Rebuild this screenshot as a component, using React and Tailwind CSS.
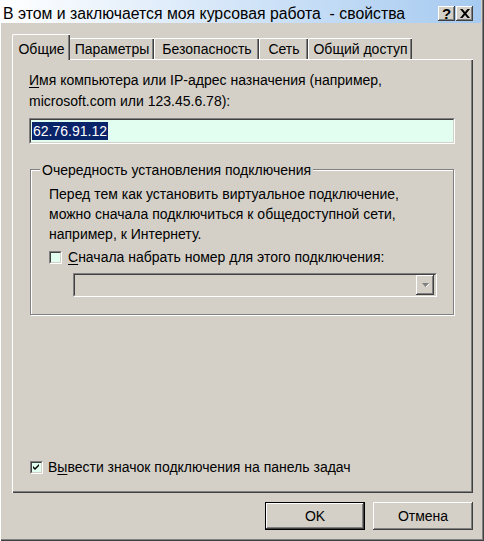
import React from "react";

const font = { fontFamily: '"Liberation Sans", Arial, sans-serif' };

function Sunken({ className = "", children }) {
  return (
    <div className={"border-t border-l border-[#808080] border-b border-r border-b-white border-r-white " + className}>
      <div className="h-full w-full border-t border-l border-[#404040] border-b border-r border-b-[#d4d0c8] border-r-[#d4d0c8]">
        {children}
      </div>
    </div>
  );
}

function Checkbox({ checked }) {
  return (
    <Sunken className="w-[13px] h-[13px] shrink-0">
      <div className="w-full h-full bg-[#e1fef1] flex items-center justify-center">
        {checked && (
          <svg width="7" height="7" viewBox="0 0 7 7">
            <path d="M0 2 L2 4 L6 0 L6 2 L2 6 L0 4 Z" fill="#000" />
          </svg>
        )}
      </div>
    </Sunken>
  );
}

function TitleButton({ children }) {
  return (
    <div className="w-[17px] h-[15px] bg-[#d4d0c8] shadow-[inset_-1px_-1px_#404040,inset_1px_1px_#fff,inset_-2px_-2px_#808080] flex items-center justify-center">
      {children}
    </div>
  );
}

function Tab({ label, active, width }) {
  if (active) {
    return (
      <div
        className="relative z-10 h-[26px] -mb-px -ml-[2px] -mr-[1px] bg-[#d4d0c8] border-t border-l border-white rounded-tl-[2px] shadow-[inset_-1px_0_#404040,inset_-2px_0_#808080] flex items-start justify-center pt-[4px] text-[14px] text-black"
        style={{ width }}
      >
        {label}
      </div>
    );
  }
  return (
    <div
      className="h-[21px] bg-[#d4d0c8] border-t border-l border-white rounded-tl-[2px] shadow-[inset_-1px_0_#404040,inset_-2px_0_#808080] flex items-center justify-center text-[14px] text-black"
      style={{ width }}
    >
      {label}
    </div>
  );
}

export default function App() {
  return (
    <div
      className="w-[484px] h-[541px] bg-[#d4d0c8] relative overflow-hidden shadow-[inset_1px_0_#fff,inset_-1px_-1px_#404040,inset_-2px_-2px_#808080] flex flex-col"
      style={font}
    >
      {/* Title bar */}
      <div className="h-[23px] mr-[3px] bg-gradient-to-r from-white to-[#a6caf0] flex items-start justify-between">
        <div className="pl-[3px] pt-[5px] text-[15.8px] leading-[18px] text-black whitespace-pre">
          В этом и заключается моя курсовая работа  - свойства
        </div>
        <div className="flex pt-[6px] pr-[8px]">
          <TitleButton>
            <span className="text-[15px] font-bold leading-none text-black -mt-px">?</span>
          </TitleButton>
          <div className="w-[1px]" />
          <TitleButton>
            <svg width="10" height="9" viewBox="0 0 10 9">
              <path d="M0 0h2.5l2.5 3 2.5-3H10L6.3 4.5 10 9H7.5L5 6 2.5 9H0l3.7-4.5z" fill="#000" />
            </svg>
          </TitleButton>
        </div>
      </div>

      {/* Tabs */}
      <div className="pl-[14px] mt-[15px] flex items-end h-[21px]">
        <Tab label="Общие" active width={58} />
        <Tab label="Параметры" width={85} />
        <Tab label="Безопасность" width={105} />
        <Tab label="Сеть" width={49} />
        <Tab label="Общий доступ" width={104} />
      </div>

      {/* Panel */}
      <div className="ml-[12px] w-[461px] h-[434px] border-t border-l border-white shadow-[inset_-1px_-1px_#404040,inset_-2px_-2px_#808080] flex flex-col pl-[16px] pt-[10px] text-[14px] text-black">
        <div className="leading-[21px]">
          <span className="underline underline-offset-2">И</span>мя компьютера или IP-адрес назначения (например,
          <br />
          microsoft.com или 123.45.6.78):
        </div>

        <Sunken className="mt-[6px] w-[426px] h-[26px]">
          <div className="w-full h-full bg-[#e1fef1] flex items-center pl-[1px]">
            <span className="bg-[#0a246a] text-white leading-[18px] px-[1px]">62.76.91.12</span>
          </div>
        </Sunken>

        {/* Group box */}
        <div className="relative mt-[25px] ml-[1px] w-[424px] h-[146px] border border-[#808080] shadow-[1px_1px_#fff,inset_1px_1px_#fff] pl-[18px] pt-[14px]">
          <span className="absolute left-[9px] -top-[10px] px-[2px] bg-[#d4d0c8] leading-[20px]">
            Очередность установления подключения
          </span>
          <div className="leading-[20px]">
            Перед тем как установить виртуальное подключение,
            <br />
            можно сначала подключиться к общедоступной сети,
            <br />
            например, к Интернету.
          </div>
          <div className="mt-[3px] flex items-center gap-[6px] h-[20px]">
            <Checkbox />
            <span>
              <span className="underline underline-offset-2">С</span>начала набрать номер для этого подключения:
            </span>
          </div>
          <Sunken className="mt-[6px] ml-[24px] w-[364px] h-[24px]">
            <div className="w-full h-full flex justify-end items-center pr-[1px]">
              <div className="w-[18px] h-[20px] bg-[#d4d0c8] shadow-[inset_-1px_-1px_#404040,inset_1px_1px_#fff,inset_-2px_-2px_#808080] flex items-center justify-center">
                <svg width="9" height="6" viewBox="0 0 9 6">
                  <path d="M1 1h7L4.5 5z" fill="#808080" />
                  <path d="M5 5L8 2" stroke="#fff" strokeWidth="1" />
                </svg>
              </div>
            </div>
          </Sunken>
        </div>

        <div className="mt-auto mb-[16px] flex items-center gap-[5px] h-[20px] ml-[1px]">
          <Checkbox checked />
          <span>
            В<span className="underline underline-offset-2">ы</span>вести значок подключения на панель задач
          </span>
        </div>
      </div>

      {/* Buttons */}
      <div className="mt-[9px] flex justify-end gap-[8px] pr-[11px] text-[14px]">
        <div className="w-[100px] h-[28px] border border-black">
          <div className="w-full h-full bg-[#d4d0c8] shadow-[inset_-1px_-1px_#404040,inset_1px_1px_#fff,inset_-2px_-2px_#808080] flex items-center justify-center">
            OK
          </div>
        </div>
        <div className="w-[100px] h-[28px] bg-[#d4d0c8] shadow-[inset_-1px_-1px_#404040,inset_1px_1px_#fff,inset_-2px_-2px_#808080] flex items-center justify-center">
          Отмена
        </div>
      </div>
    </div>
  );
}
